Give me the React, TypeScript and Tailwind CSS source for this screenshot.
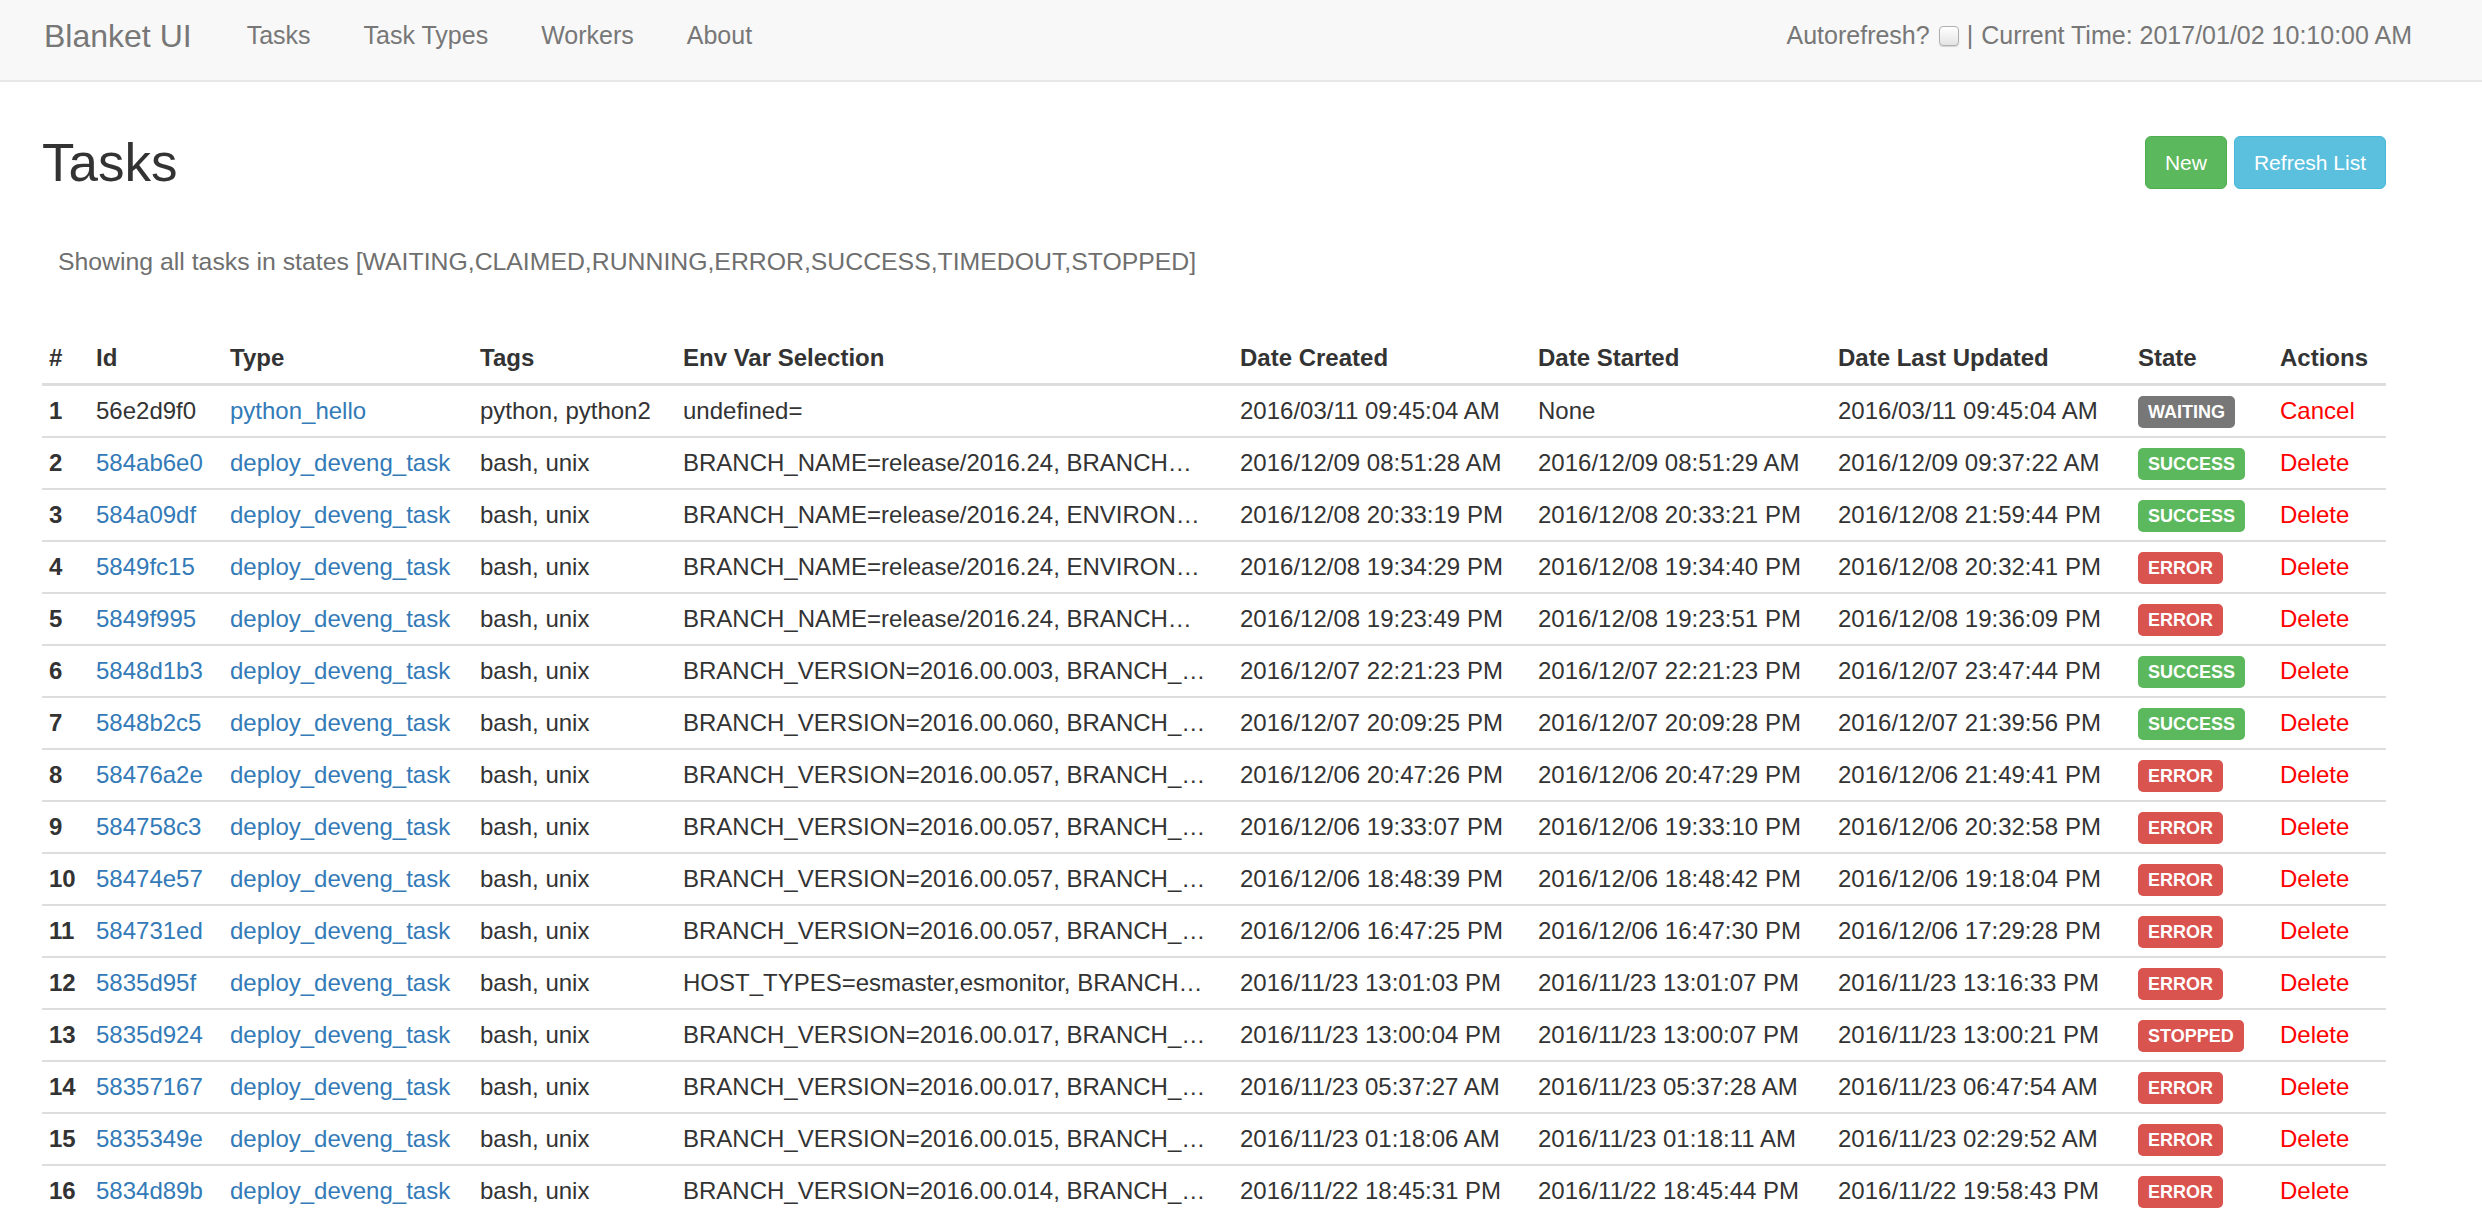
import React from "react";

type Task = {
    id: string;
    type: string;
    tags: string;
    env: string;
    created: string;
    started: string;
    updated: string;
    state: "WAITING" | "SUCCESS" | "ERROR" | "STOPPED";
};

const tasks: Task[] = [
    { id: "56e2d9f0", type: "python_hello", tags: "python, python2", env: "undefined=", created: "2016/03/11 09:45:04 AM", started: "None", updated: "2016/03/11 09:45:04 AM", state: "WAITING" },
    { id: "584ab6e0", type: "deploy_deveng_task", tags: "bash, unix", env: "BRANCH_NAME=release/2016.24, BRANCH…", created: "2016/12/09 08:51:28 AM", started: "2016/12/09 08:51:29 AM", updated: "2016/12/09 09:37:22 AM", state: "SUCCESS" },
    { id: "584a09df", type: "deploy_deveng_task", tags: "bash, unix", env: "BRANCH_NAME=release/2016.24, ENVIRON…", created: "2016/12/08 20:33:19 PM", started: "2016/12/08 20:33:21 PM", updated: "2016/12/08 21:59:44 PM", state: "SUCCESS" },
    { id: "5849fc15", type: "deploy_deveng_task", tags: "bash, unix", env: "BRANCH_NAME=release/2016.24, ENVIRON…", created: "2016/12/08 19:34:29 PM", started: "2016/12/08 19:34:40 PM", updated: "2016/12/08 20:32:41 PM", state: "ERROR" },
    { id: "5849f995", type: "deploy_deveng_task", tags: "bash, unix", env: "BRANCH_NAME=release/2016.24, BRANCH…", created: "2016/12/08 19:23:49 PM", started: "2016/12/08 19:23:51 PM", updated: "2016/12/08 19:36:09 PM", state: "ERROR" },
    { id: "5848d1b3", type: "deploy_deveng_task", tags: "bash, unix", env: "BRANCH_VERSION=2016.00.003, BRANCH_…", created: "2016/12/07 22:21:23 PM", started: "2016/12/07 22:21:23 PM", updated: "2016/12/07 23:47:44 PM", state: "SUCCESS" },
    { id: "5848b2c5", type: "deploy_deveng_task", tags: "bash, unix", env: "BRANCH_VERSION=2016.00.060, BRANCH_…", created: "2016/12/07 20:09:25 PM", started: "2016/12/07 20:09:28 PM", updated: "2016/12/07 21:39:56 PM", state: "SUCCESS" },
    { id: "58476a2e", type: "deploy_deveng_task", tags: "bash, unix", env: "BRANCH_VERSION=2016.00.057, BRANCH_…", created: "2016/12/06 20:47:26 PM", started: "2016/12/06 20:47:29 PM", updated: "2016/12/06 21:49:41 PM", state: "ERROR" },
    { id: "584758c3", type: "deploy_deveng_task", tags: "bash, unix", env: "BRANCH_VERSION=2016.00.057, BRANCH_…", created: "2016/12/06 19:33:07 PM", started: "2016/12/06 19:33:10 PM", updated: "2016/12/06 20:32:58 PM", state: "ERROR" },
    { id: "58474e57", type: "deploy_deveng_task", tags: "bash, unix", env: "BRANCH_VERSION=2016.00.057, BRANCH_…", created: "2016/12/06 18:48:39 PM", started: "2016/12/06 18:48:42 PM", updated: "2016/12/06 19:18:04 PM", state: "ERROR" },
    { id: "584731ed", type: "deploy_deveng_task", tags: "bash, unix", env: "BRANCH_VERSION=2016.00.057, BRANCH_…", created: "2016/12/06 16:47:25 PM", started: "2016/12/06 16:47:30 PM", updated: "2016/12/06 17:29:28 PM", state: "ERROR" },
    { id: "5835d95f", type: "deploy_deveng_task", tags: "bash, unix", env: "HOST_TYPES=esmaster,esmonitor, BRANCH…", created: "2016/11/23 13:01:03 PM", started: "2016/11/23 13:01:07 PM", updated: "2016/11/23 13:16:33 PM", state: "ERROR" },
    { id: "5835d924", type: "deploy_deveng_task", tags: "bash, unix", env: "BRANCH_VERSION=2016.00.017, BRANCH_…", created: "2016/11/23 13:00:04 PM", started: "2016/11/23 13:00:07 PM", updated: "2016/11/23 13:00:21 PM", state: "STOPPED" },
    { id: "58357167", type: "deploy_deveng_task", tags: "bash, unix", env: "BRANCH_VERSION=2016.00.017, BRANCH_…", created: "2016/11/23 05:37:27 AM", started: "2016/11/23 05:37:28 AM", updated: "2016/11/23 06:47:54 AM", state: "ERROR" },
    { id: "5835349e", type: "deploy_deveng_task", tags: "bash, unix", env: "BRANCH_VERSION=2016.00.015, BRANCH_…", created: "2016/11/23 01:18:06 AM", started: "2016/11/23 01:18:11 AM", updated: "2016/11/23 02:29:52 AM", state: "ERROR" },
    { id: "5834d89b", type: "deploy_deveng_task", tags: "bash, unix", env: "BRANCH_VERSION=2016.00.014, BRANCH_…", created: "2016/11/22 18:45:31 PM", started: "2016/11/22 18:45:44 PM", updated: "2016/11/22 19:58:43 PM", state: "ERROR" },
];

const badgeBg: Record<Task["state"], string> = {
    WAITING: "bg-[#777777]",
    SUCCESS: "bg-[#5cb85c]",
    ERROR: "bg-[#d9534f]",
    STOPPED: "bg-[#d9534f]",
};

const headers = ["#", "Id", "Type", "Tags", "Env Var Selection", "Date Created", "Date Started", "Date Last Updated", "State", "Actions"];

const cell = "border-t-2 border-[#ddd] px-[7px] py-[8px] leading-[34px] whitespace-nowrap";

function Navbar() {
    return (
        <nav className="flex h-[82px] items-center border-b-2 border-[#e7e7e7] bg-[#f8f8f8] pb-[8px] pl-[44px] pr-[70px] text-[25px] text-[#777]">
            <a className="text-[32px] text-[#777]">Blanket UI</a>
            <ul className="ml-[55px] flex gap-[53px]">
                <li>Tasks</li>
                <li>Task Types</li>
                <li>Workers</li>
                <li>About</li>
            </ul>
            <div className="ml-auto flex items-center">
                <span>Autorefresh?</span>
                <span className="ml-[9px] inline-block size-[20px] rounded-[4px] border border-[#b0b0b0] bg-gradient-to-b from-white to-[#e4e4e4] shadow-[0_1px_1px_rgba(0,0,0,0.15)]" />
                <span className="ml-[8px]">|</span>
                <span className="ml-[8px]">Current Time: 2017/01/02 10:10:00 AM</span>
            </div>
        </nav>
    );
}

export default function App() {
    return (
        <div className="min-h-screen bg-white font-['Liberation_Sans',Arial,sans-serif] text-[#333]">
            <Navbar />
            <main className="pl-[42px] pr-[96px]">
                <div className="mt-[54px] flex items-center justify-between">
                    <h1 className="text-[53px] leading-[53px] text-[#333]">Tasks</h1>
                    <div className="flex gap-[7px]">
                        <button
                            type="button"
                            className="h-[53px] rounded-[6px] border border-[#4cae4c] bg-[#5cb85c] px-[19px] text-[21px] text-white"
                        >
                            New
                        </button>
                        <button
                            type="button"
                            className="h-[53px] rounded-[6px] border border-[#46b8da] bg-[#5bc0de] px-[19px] text-[21px] text-white"
                        >
                            Refresh List
                        </button>
                    </div>
                </div>
                <p className="mt-[55px] pl-[16px] text-[24.8px] leading-[36px] text-[#6f6f6f]">
                    Showing all tasks in states [WAITING,CLAIMED,RUNNING,ERROR,SUCCESS,TIMEDOUT,STOPPED]
                </p>
                <table className="mt-[53px] w-[2344px] table-fixed text-[24px]">
                    <colgroup>
                        <col className="w-[47px]" />
                        <col className="w-[134px]" />
                        <col className="w-[250px]" />
                        <col className="w-[203px]" />
                        <col className="w-[557px]" />
                        <col className="w-[298px]" />
                        <col className="w-[300px]" />
                        <col className="w-[300px]" />
                        <col className="w-[142px]" />
                        <col className="w-[113px]" />
                    </colgroup>
                    <thead>
                        <tr>
                            {headers.map((h) => (
                                <th
                                    key={h}
                                    className="border-b-[3px] border-[#ddd] px-[7px] py-[8px] text-left font-bold leading-[34px] whitespace-nowrap"
                                >
                                    {h}
                                </th>
                            ))}
                        </tr>
                    </thead>
                    <tbody>
                        {tasks.map((task, i) => (
                            <tr key={task.id}>
                                <td className={`${cell} font-bold`}>{i + 1}</td>
                                <td className={cell}>
                                    {i === 0 ? task.id : <a className="text-[#337ab7]">{task.id}</a>}
                                </td>
                                <td className={cell}>
                                    <a className="text-[#337ab7]">{task.type}</a>
                                </td>
                                <td className={cell}>{task.tags}</td>
                                <td className={`${cell} truncate`}>{task.env}</td>
                                <td className={cell}>{task.created}</td>
                                <td className={cell}>{task.started}</td>
                                <td className={cell}>{task.updated}</td>
                                <td className={cell}>
                                    <span
                                        className={`mt-[2px] inline-block h-[32px] rounded-[5px] px-[10px] align-top text-[18px] font-bold leading-[32px] text-white ${badgeBg[task.state]}`}
                                    >
                                        {task.state}
                                    </span>
                                </td>
                                <td className={cell}>
                                    <a className="text-[#ff0000]">{i === 0 ? "Cancel" : "Delete"}</a>
                                </td>
                            </tr>
                        ))}
                    </tbody>
                </table>
            </main>
        </div>
    );
}
